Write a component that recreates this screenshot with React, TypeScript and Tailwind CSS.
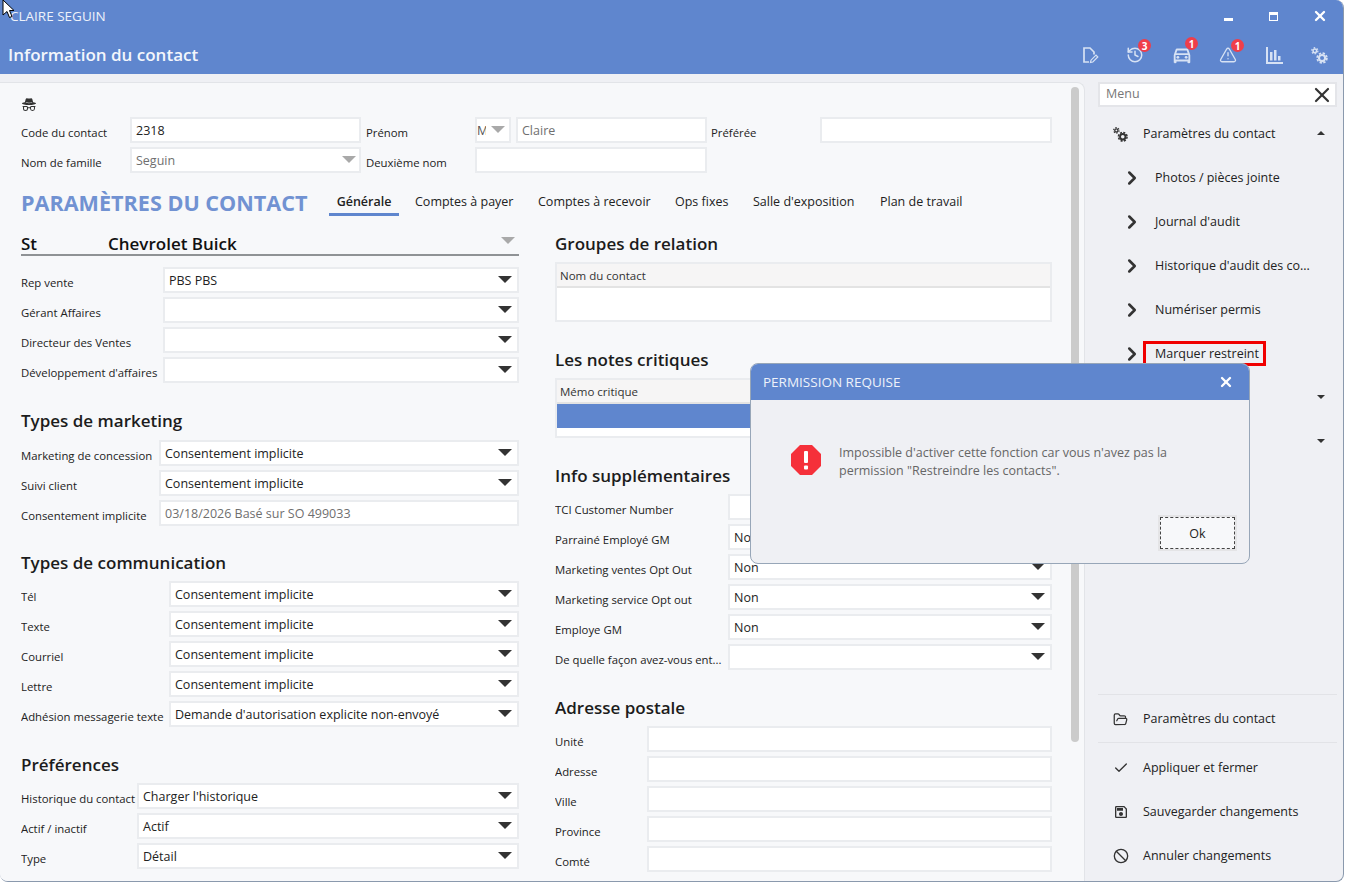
import { Ban, Check, ChevronRight, FolderOpen, History, TriangleAlert, X } from 'lucide-react';
import { BsIncognito } from 'react-icons/bs';
import { MdOutlineDirectionsCar, MdOutlineSave } from 'react-icons/md';

const Caret = ({ muted = false }: { muted?: boolean }) => (
  <span
    className={`h-0 w-0 border-x-[7px] border-t-[7px] border-x-transparent ${muted ? 'border-t-[#a9a9a9]' : 'border-t-[#333333]'}`}
  />
);

const Cogs = ({ className }: { className: string }) => (
  <svg viewBox="0 0 16 16" className={className} fill="none" stroke="currentColor">
    <circle cx="3.6" cy="3.6" r="1.7" strokeWidth="1.4" />
    <circle cx="3.6" cy="3.6" r="2.9" strokeWidth="1.2" strokeDasharray="1.5 1.54" />
    <circle cx="10.4" cy="10.4" r="2.9" strokeWidth="2" />
    <circle cx="10.4" cy="10.4" r="4.6" strokeWidth="1.6" strokeDasharray="2.2 1.41" />
  </svg>
);

const Field = ({
  value,
  width,
  caret,
  muted,
}: {
  value?: string;
  width: string;
  caret?: boolean;
  muted?: boolean;
}) => (
  <div
    className={`flex h-[26px] shrink-0 items-center justify-between border-2 border-[#eaecef] bg-white pl-[4px] pr-[4px] ${width} ${muted ? 'text-[#6f6f6f]' : 'text-[#222222]'}`}
  >
    <span className="mt-[3px] whitespace-nowrap text-[12.5px]">{value}</span>
    {caret && (
      <span className="mr-[1px] -mt-[2px] flex">
        <Caret />
      </span>
    )}
  </div>
);

const Row = ({
  label,
  labelWidth,
  fieldWidth,
  value,
  caret = true,
  muted,
}: {
  label: string;
  labelWidth: string;
  fieldWidth: string;
  value?: string;
  caret?: boolean;
  muted?: boolean;
}) => (
  <div className="flex h-[26px] items-center">
    <span className={`shrink-0 overflow-hidden whitespace-nowrap pt-[6px] text-[11.35px] text-[#222222] ${labelWidth}`}>{label}</span>
    <Field value={value} width={fieldWidth} caret={caret} muted={muted} />
  </div>
);

const SectionTitle = ({ children, className }: { children: string; className: string }) => (
  <h2 className={`h-[24px] text-[17px] font-semibold leading-[24px] text-[#1c1c1c] ${className}`}>{children}</h2>
);

const Table = ({ title, selected }: { title: string; selected?: boolean }) => (
  <div className="mt-[6px] h-[60px] border-2 border-[#eaecef] bg-white">
    <div className="h-[24px] border-b-2 border-[#e3e3e3] bg-[#f6f5f5] pl-[3px] text-[11.5px] leading-[23px] text-[#333333]">{title}</div>
    {selected && <div className="h-[24px] bg-[#5f86ce]" />}
  </div>
);

const tabs = [
  { label: 'Comptes à payer', width: 'w-[123px]' },
  { label: 'Comptes à recevoir', width: 'w-[137px]' },
  { label: 'Ops fixes', width: 'w-[78px]' },
  { label: "Salle d'exposition", width: 'w-[127px]' },
  { label: 'Plan de travail', width: 'w-[100px]' },
];

const menuItems = ['Photos / pièces jointe', "Journal d'audit", "Historique d'audit des co...", 'Numériser permis'];

const ToolBadge = ({ count }: { count: number }) => (
  <span className="absolute -top-[7px] left-[12px] flex h-[13px] w-[13px] items-center justify-center rounded-full bg-[#ef3e4a] text-[10px] font-bold leading-none text-white">
    {count}
  </span>
);

export default function App() {
  return (
    <div className="relative h-[883px] w-[1345px] overflow-hidden bg-white font-['Open_Sans',sans-serif]">
      <div className="flex h-[882px] w-[1344px] flex-col overflow-hidden rounded-tr-lg rounded-b-lg border-r border-b border-[#8a99ad] bg-[#eff0f4]">
        {/* Title bar */}
        <header className="h-[74px] shrink-0 bg-[#5f86ce] text-white">
          <div className="flex h-[32px] items-center justify-between pl-[10px] pr-[15px]">
            <span className="text-[13.5px] text-[#eef2fa]">CLAIRE SEGUIN</span>
            <div className="flex items-center">
              <span className="mt-[6px] h-[3px] w-[9px] bg-white" />
              <span className="ml-[36px] h-[9px] w-[9px] border border-t-[3px] border-white" />
              <X className="ml-[34px] h-[16px] w-[16px]" strokeWidth={3.5} />
            </div>
          </div>
          <div className="flex h-[42px] items-center justify-between pt-[4px] pl-[8px] pr-[15px]">
            <span className="text-[17px] font-semibold text-[#f3f6fc]">Information du contact</span>
            <div className="flex items-center gap-[28px] text-[#d7e2f4]">
              <svg viewBox="0 0 18 18" className="h-[18px] w-[18px]" fill="none" stroke="currentColor" strokeWidth="1.7">
                <path d="M8 16H3V2h6l4 4v2.5" />
                <path d="M9.5 16.5l.5-2.3 5-5 1.8 1.8-5 5z" strokeWidth="1.2" />
              </svg>
              <span className="relative -ml-[1px] mr-[1px]">
                <History className="h-[18px] w-[18px]" strokeWidth={2} />
                <ToolBadge count={3} />
              </span>
              <span className="relative">
                <MdOutlineDirectionsCar className="-mx-[2px] h-[22px] w-[22px]" />
                <ToolBadge count={1} />
              </span>
              <span className="relative">
                <TriangleAlert className="h-[18px] w-[18px]" strokeWidth={1.8} />
                <ToolBadge count={1} />
              </span>
              <svg viewBox="0 0 18 18" className="h-[18px] w-[18px]" fill="currentColor">
                <path d="M1 1h2v15h15v2H1z" />
                <path d="M5 6h2.5v8.5H5zM9 4h2.5v10.5H9zM13 10h2.5v4.5H13z" />
              </svg>
              <Cogs className="h-[17px] w-[17px]" />
            </div>
          </div>
        </header>

        <div className="flex min-h-0 flex-1 pt-[8px]">
          {/* Main form panel */}
          <main className="relative w-[1085px] shrink-0 overflow-hidden rounded-tr-lg border-t border-r border-[#e2e4e8] bg-[#f7f8fa] pl-[21px]">
            <BsIncognito className="mt-[14px] h-[16px] w-[16px] text-[#333333]" />
            <div className="mt-[4px] flex flex-col gap-[4px]">
              <div className="flex h-[26px] items-center">
                <Row label="Code du contact" labelWidth="w-[109px]" fieldWidth="w-[231px]" value="2318" caret={false} />
                <span className="ml-[5px] w-[109px] pt-[6px] text-[11.35px] text-[#222222]">Prénom</span>
                <div className="flex h-[26px] w-[36px] items-center justify-between border-2 border-[#eaecef] bg-white pr-[4px]">
                  <span className="mt-[3px] w-[9px] overflow-hidden text-[12.5px] text-[#555555]">M</span>
                  <span className="-mt-[1px] flex"><Caret muted /></span>
                </div>
                <div className="ml-[5px]">
                  <Field value="Claire" width="w-[191px]" muted />
                </div>
                <span className="ml-[4px] w-[109px] pt-[6px] text-[11.35px] text-[#222222]">Préférée</span>
                <Field width="w-[232px]" />
              </div>
              <div className="flex h-[26px] items-center">
                <span className="w-[109px] pt-[6px] text-[11.35px] text-[#222222]">Nom de famille</span>
                <div className="flex h-[26px] w-[231px] items-center justify-between border-2 border-[#eaecef] bg-white pl-[4px] pr-[3px]">
                  <span className="mt-[3px] text-[12.5px] text-[#6f6f6f]">Seguin</span>
                  <span className="-mt-[1px] flex"><Caret muted /></span>
                </div>
                <span className="ml-[5px] w-[109px] pt-[6px] text-[11.35px] text-[#222222]">Deuxième nom</span>
                <Field width="w-[232px]" />
              </div>
            </div>

            {/* Section title and tabs */}
            <div className="mt-[14px] flex h-[45px] items-start">
              <h1 className="w-[308px] whitespace-nowrap text-[21.6px] font-bold leading-[31px] text-[#7192d2]">PARAMÈTRES DU CONTACT</h1>
              <div className="flex h-[29px] w-[70px] items-center justify-center border-b-[3px] border-[#5f86ce] pt-[4px] text-[12.5px] font-semibold text-[#222222]">Générale</div>
              <div className="flex h-[29px]">
                {tabs.map((tab) => (
                  <div key={tab.label} className={`flex items-center whitespace-nowrap pl-[16px] pt-[2px] text-[12.5px] text-[#222222] ${tab.width}`}>
                    {tab.label}
                  </div>
                ))}
              </div>
            </div>

            <div className="flex gap-[36px]">
              {/* Left column */}
              <div className="w-[498px] shrink-0">
                <div className="flex h-[24px] items-center justify-between border-b-2 border-[#8f9295] pr-[4px] pt-[2px] text-[17px] font-semibold text-[#111111]">
                  <span className="flex">
                    <span className="w-[87px]">St</span>
                    <span>Chevrolet Buick</span>
                  </span>
                  <span className="-mt-[8px] flex"><Caret muted /></span>
                </div>
                <div className="mt-[11px] flex flex-col gap-[4px]">
                  <Row label="Rep vente" labelWidth="w-[142px]" fieldWidth="w-[356px]" value="PBS PBS" />
                  <Row label="Gérant Affaires" labelWidth="w-[142px]" fieldWidth="w-[356px]" />
                  <Row label="Directeur des Ventes" labelWidth="w-[142px]" fieldWidth="w-[356px]" />
                  <Row label="Développement d'affaires" labelWidth="w-[142px]" fieldWidth="w-[356px]" />
                </div>
                <SectionTitle className="mt-[26px]">Types de marketing</SectionTitle>
                <div className="mt-[7px] flex flex-col gap-[4px]">
                  <Row label="Marketing de concession" labelWidth="w-[138px]" fieldWidth="w-[360px]" value="Consentement implicite" />
                  <Row label="Suivi client" labelWidth="w-[138px]" fieldWidth="w-[360px]" value="Consentement implicite" />
                  <Row label="Consentement implicite" labelWidth="w-[138px]" fieldWidth="w-[360px]" value="03/18/2026 Basé sur SO 499033" caret={false} muted />
                </div>
                <SectionTitle className="mt-[25px]">Types de communication</SectionTitle>
                <div className="mt-[6px] flex flex-col gap-[4px]">
                  <Row label="Tél" labelWidth="w-[148px]" fieldWidth="w-[350px]" value="Consentement implicite" />
                  <Row label="Texte" labelWidth="w-[148px]" fieldWidth="w-[350px]" value="Consentement implicite" />
                  <Row label="Courriel" labelWidth="w-[148px]" fieldWidth="w-[350px]" value="Consentement implicite" />
                  <Row label="Lettre" labelWidth="w-[148px]" fieldWidth="w-[350px]" value="Consentement implicite" />
                  <Row label="Adhésion messagerie texte" labelWidth="w-[148px]" fieldWidth="w-[350px]" value="Demande d'autorisation explicite non-envoyé" />
                </div>
                <SectionTitle className="mt-[26px]">Préférences</SectionTitle>
                <div className="mt-[6px] flex flex-col gap-[4px]">
                  <Row label="Historique du contact" labelWidth="w-[116px]" fieldWidth="w-[382px]" value="Charger l'historique" />
                  <Row label="Actif / inactif" labelWidth="w-[116px]" fieldWidth="w-[382px]" value="Actif" />
                  <Row label="Type" labelWidth="w-[116px]" fieldWidth="w-[382px]" value="Détail" />
                </div>
              </div>

              {/* Right column */}
              <div className="w-[497px] shrink-0">
                <SectionTitle className="">Groupes de relation</SectionTitle>
                <Table title="Nom du contact" />
                <SectionTitle className="mt-[26px]">Les notes critiques</SectionTitle>
                <Table title="Mémo critique" selected />
                <SectionTitle className="mt-[26px]">Info supplémentaires</SectionTitle>
                <div className="mt-[6px] flex flex-col gap-[4px]">
                  <Row label="TCI Customer Number" labelWidth="w-[173px]" fieldWidth="w-[324px]" caret={false} />
                  <Row label="Parrainé Employé GM" labelWidth="w-[173px]" fieldWidth="w-[324px]" value="Non" />
                  <Row label="Marketing ventes Opt Out" labelWidth="w-[173px]" fieldWidth="w-[324px]" value="Non" />
                  <Row label="Marketing service Opt out" labelWidth="w-[173px]" fieldWidth="w-[324px]" value="Non" />
                  <Row label="Employe GM" labelWidth="w-[173px]" fieldWidth="w-[324px]" value="Non" />
                  <Row label="De quelle façon avez-vous ent..." labelWidth="w-[173px]" fieldWidth="w-[324px]" />
                </div>
                <SectionTitle className="mt-[26px]">Adresse postale</SectionTitle>
                <div className="mt-[6px] flex flex-col gap-[4px]">
                  {['Unité', 'Adresse', 'Ville', 'Province', 'Comté'].map((label) => (
                    <Row key={label} label={label} labelWidth="w-[92px]" fieldWidth="w-[405px]" caret={false} />
                  ))}
                </div>
              </div>
            </div>

            {/* Scrollbar */}
            <div className="absolute top-[4px] right-[5px] h-[655px] w-[8px] rounded-full bg-[#cbcbcb]" />
          </main>

          {/* Side menu */}
          <aside className="flex min-w-0 flex-1 flex-col pl-[13px] pr-[6px] text-[#222222]">
            <div className="flex h-[25px] items-center justify-between border-2 border-[#e4e5e9] bg-white pl-[6px]">
              <span className="text-[12.5px] text-[#777777]">Menu</span>
              <X className="mr-[1px] h-[24px] w-[24px] text-[#333333]" strokeWidth={2.2} />
            </div>
            <nav className="mt-[5px] text-[12.5px]">
              <div className="flex h-[44px] items-center pl-[15px] pr-[12px]">
                <Cogs className="h-[15px] w-[15px] text-[#333333]" />
                <span className="ml-[15px] flex-1">Paramètres du contact</span>
                <span className="mb-[2px] h-0 w-0 border-x-[4px] border-b-[4px] border-x-transparent border-b-[#333333]" />
              </div>
              {menuItems.map((item) => (
                <div key={item} className="flex h-[44px] items-center pl-[25px]">
                  <ChevronRight className="-mx-[2px] h-[22px] w-[22px] text-[#333333]" strokeWidth={2.8} />
                  <span className="ml-[14px] whitespace-nowrap">{item}</span>
                </div>
              ))}
              <div className="flex h-[44px] items-center pl-[25px]">
                <ChevronRight className="-mx-[2px] h-[22px] w-[22px] text-[#333333]" strokeWidth={2.8} />
                <span className="mb-[2px] ml-[2px] whitespace-nowrap border-[3px] border-[#f00000] pl-[9px] pr-[4px] leading-[19px]">Marquer restreint</span>
              </div>
              <div className="flex h-[44px] items-center justify-end pb-[3px] pr-[12px]">
                <span className="h-0 w-0 border-x-[4px] border-t-[4px] border-x-transparent border-t-[#333333]" />
              </div>
              <div className="flex h-[44px] items-center justify-end pb-[3px] pr-[12px]">
                <span className="h-0 w-0 border-x-[4px] border-t-[4px] border-x-transparent border-t-[#333333]" />
              </div>
            </nav>
            <div className="mt-auto pb-[3px] text-[12.5px]">
              <div className="mb-[3px] flex h-[49px] items-center border-y border-[#e2e3e7] pl-[15px] pt-[1px]">
                <FolderOpen className="h-[15px] w-[15px] text-[#333333]" strokeWidth={2} />
                <span className="ml-[15px]">Paramètres du contact</span>
              </div>
              <div className="flex h-[44px] items-center pl-[15px]">
                <Check className="h-[16px] w-[16px] text-[#333333]" strokeWidth={2} />
                <span className="ml-[14px]">Appliquer et fermer</span>
              </div>
              <div className="flex h-[44px] items-center pl-[15px]">
                <MdOutlineSave className="h-[16px] w-[16px] text-[#333333]" />
                <span className="ml-[14px]">Sauvegarder changements</span>
              </div>
              <div className="flex h-[44px] items-center pl-[15px]">
                <Ban className="h-[16px] w-[16px] text-[#333333]" strokeWidth={2} />
                <span className="ml-[14px]">Annuler changements</span>
              </div>
            </div>
          </aside>
        </div>
      </div>

      {/* Permission dialog */}
      <div className="absolute top-[363px] left-[750px] flex h-[201px] w-[500px] flex-col overflow-hidden rounded-lg border border-[#97a6b8] bg-[#eff0f4]">
        <div className="flex h-[36px] shrink-0 items-center justify-between bg-[#5f86ce] pl-[12px] pr-[15px] text-white">
          <span className="text-[13.5px] text-[#eef2fa]">PERMISSION REQUISE</span>
          <X className="h-[16px] w-[16px]" strokeWidth={3.5} />
        </div>
        <div className="mt-[45px] flex items-start pl-[40px]">
          <svg viewBox="0 0 30 30" className="h-[30px] w-[30px] shrink-0">
            <path d="M9 0h12l9 9v12l-9 9H9l-9-9V9z" fill="#f5303a" />
            <rect x="13" y="6" width="4" height="12" rx="1" fill="white" />
            <rect x="13" y="20.5" width="4" height="4" rx="1" fill="white" />
          </svg>
          <p className="-mt-[1px] ml-[18px] w-[360px] text-[12.5px] leading-[18px] text-[#666666]">
            Impossible d'activer cette fonction car vous n'avez pas la permission "Restreindre les contacts".
          </p>
        </div>
        <div className="mt-auto flex justify-end pb-[12px] pr-[12px]">
          <div className="border-2 border-[#e4e4e6]">
            <div className="flex h-[32px] w-[75px] items-center justify-center border border-dashed border-[#444444] bg-[#f7f8fa] pt-[3px] text-[12.5px] text-[#222222]">
              Ok
            </div>
          </div>
        </div>
      </div>

      {/* Mouse cursor from the capture */}
      <svg viewBox="0 0 14 20" className="absolute top-0 left-[2px] h-[20px] w-[14px]">
        <path d="M1 0v15l4-3.5 2.5 6 2.5-1-2.5-6H12z" fill="white" stroke="black" strokeWidth="1" />
      </svg>
    </div>
  );
}
